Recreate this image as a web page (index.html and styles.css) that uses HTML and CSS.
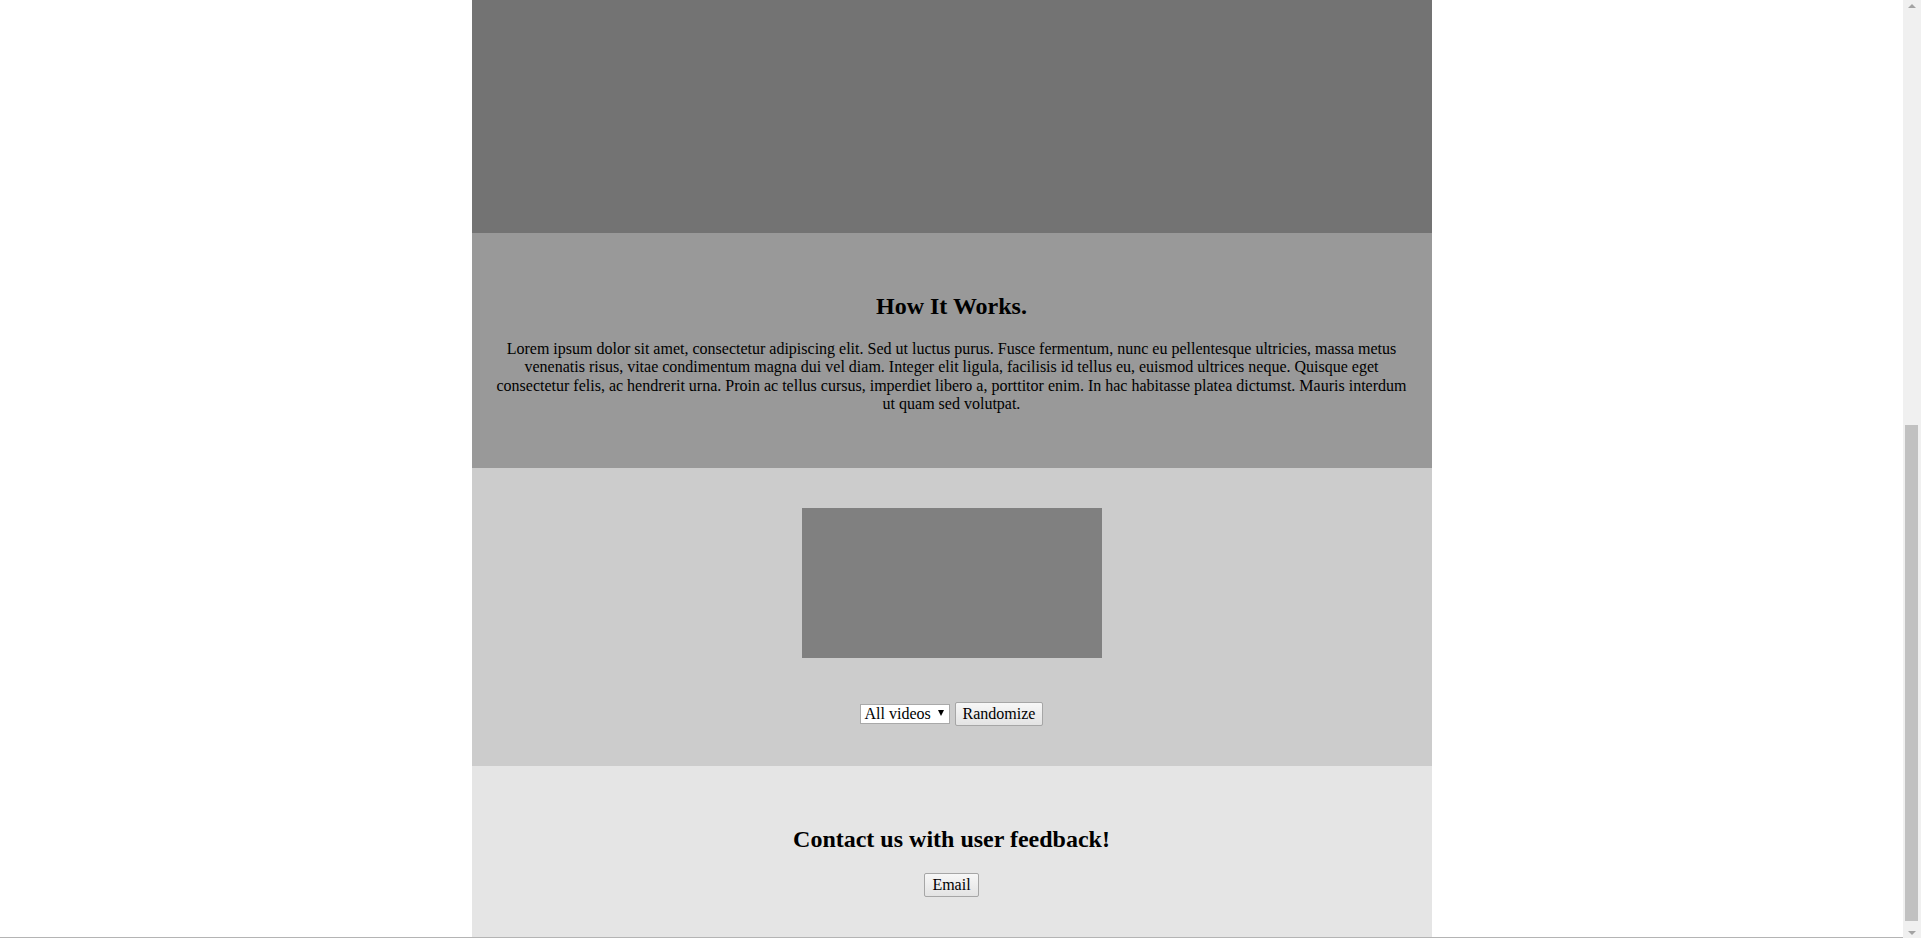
FILE: index.html
```html
<!DOCTYPE html>
<html lang="en">
<head>
<meta charset="utf-8">
<title>How It Works</title>
<link rel="stylesheet" href="styles.css">
</head>
<body>
<div class="page">
  <main class="viewport">
    <div class="column">
      <section class="hero"></section>
      <section class="how">
        <h2 class="title">How It Works.</h2>
        <p class="text">Lorem ipsum dolor sit amet, consectetur adipiscing elit. Sed ut luctus purus. Fusce fermentum, nunc eu pellentesque ultricies, massa metus venenatis risus, vitae condimentum magna dui vel diam. Integer elit ligula, facilisis id tellus eu, euismod ultrices neque. Quisque eget consectetur felis, ac hendrerit urna. Proin ac tellus cursus, imperdiet libero a, porttitor enim. In hac habitasse platea dictumst. Mauris interdum ut quam sed volutpat.</p>
      </section>
      <section class="videos">
        <div class="video"></div>
        <div class="controls">
          <div class="select"><span>All videos</span><span class="caret"></span></div>
          <button class="btn" type="button">Randomize</button>
        </div>
      </section>
      <section class="contact">
        <h2 class="title">Contact us with user feedback!</h2>
        <button class="btn" type="button">Email</button>
      </section>
    </div>
    <div class="bottomline"></div>
  </main>
  <aside class="scrollbar">
    <div class="sb-btn"><span class="sb-up"></span></div>
    <div class="sb-track"><div class="sb-thumb"></div></div>
    <div class="sb-btn"><span class="sb-down"></span></div>
  </aside>
</div>
</body>
</html>
```
FILE: styles.css
```css
html, body {
  margin: 0;
  padding: 0;
  height: 938px;
  overflow: hidden;
  background: #ffffff;
  font-family: "Liberation Serif", "Times New Roman", serif;
  font-size: 16px;
  color: #000;
}
.page {
  display: flex;
  height: 938px;
}
.viewport {
  flex: 1;
  display: flex;
  flex-direction: column;
  align-items: center;
  background: #fff;
}
.column {
  width: 960px;
  display: flex;
  flex-direction: column;
  text-align: center;
}
.hero {
  height: 233px;
  background: #737373;
}
.how {
  height: 235px;
  box-sizing: border-box;
  background: #999999;
  padding: 40px 20px;
  display: flow-root;
}
.title {
  font-size: 24px;
  font-weight: bold;
  margin: 20px 0;
}
.text {
  margin: 16px 0;
  line-height: 18.4px;
}
.videos {
  height: 298px;
  box-sizing: border-box;
  background: #cccccc;
  padding: 40px 0;
  display: flex;
  flex-direction: column;
  align-items: center;
}
.video {
  width: 300px;
  height: 150px;
  background: #808080;
}
.controls {
  margin-top: 44px;
  display: flex;
  align-items: center;
  gap: 5px;
  height: 24px;
}
.select {
  box-sizing: border-box;
  width: 90px;
  height: 20px;
  background: #fff;
  border: 1px solid #a9a9a9;
  display: flex;
  align-items: center;
  justify-content: space-between;
  padding: 0 5px 0 4px;
  line-height: 18px;
}
.caret {
  width: 0;
  height: 0;
  border-left: 3.5px solid transparent;
  border-right: 3.5px solid transparent;
  border-top: 6px solid #000;
  margin-bottom: 2px;
}
.btn {
  font-family: "Liberation Serif", "Times New Roman", serif;
  font-size: 16px;
  line-height: 18px;
  height: 24px;
  padding: 2px 7px;
  color: #000;
  background: linear-gradient(#f7f7f7, #e3e3e3);
  border: 1px solid #a6a6a6;
  border-radius: 2px;
}
.contact {
  height: 171px;
  box-sizing: border-box;
  background: #e5e5e5;
  padding: 40px 0;
  display: flow-root;
}
.contact .btn {
  margin: 0 auto;
}
.bottomline {
  margin-top: auto;
  width: 100%;
  height: 1px;
  background: #b4b4b4;
}
.scrollbar {
  width: 18px;
  display: flex;
  flex-direction: column;
  background: #f0f0f0;
}
.sb-btn {
  height: 17px;
  display: flex;
  align-items: center;
  justify-content: center;
}
.sb-up {
  width: 0;
  height: 0;
  border-left: 4px solid transparent;
  border-right: 4px solid transparent;
  border-bottom: 4px solid #a3a3a3;
  margin-top: -6px;
}
.sb-down {
  width: 0;
  height: 0;
  border-left: 4px solid transparent;
  border-right: 4px solid transparent;
  border-top: 4px solid #a3a3a3;
  margin-top: 6px;
}
.sb-track {
  flex: 1;
  display: flex;
  flex-direction: column;
  justify-content: flex-end;
  padding: 0 3px 0 2px;
}
.sb-thumb {
  height: 496px;
  background: #c1c1c1;
}
```
